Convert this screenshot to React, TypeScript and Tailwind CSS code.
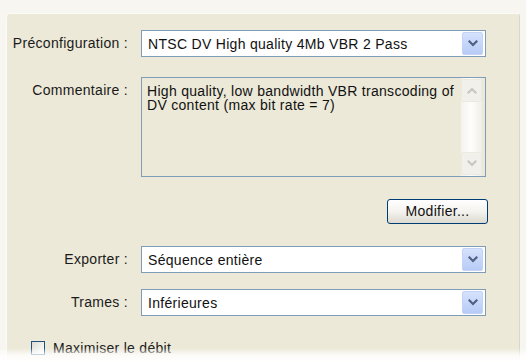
import React from "react";

const font = { fontFamily: '"Liberation Sans", Arial, sans-serif' };

function Chevron({ color = "#4d6185", up = false }: { color?: string; up?: boolean }) {
  return (
    <svg width="10" height="7" viewBox="0 0 10 7">
      <path
        d={up ? "M1.5 5.5 L5 2 L8.5 5.5" : "M1.5 1.5 L5 5 L8.5 1.5"}
        fill="none"
        stroke={color}
        strokeWidth="2.2"
        strokeLinecap="square"
      />
    </svg>
  );
}

function Select({ value }: { value: string }) {
  return (
    <div className="flex h-[27px] w-[345px] items-center border border-[#7f9db9] bg-white pl-[6px] pr-[2px]">
      <span className="flex-1 text-[14px] leading-none tracking-[0.3px] text-[#111]">{value}</span>
      <div className="flex h-[23px] w-[21px] items-center justify-center rounded-[2px] border border-[#c4d3f5] bg-gradient-to-b from-[#d6e2fd] to-[#b7cbf6]">
        <Chevron />
      </div>
    </div>
  );
}

export default function App() {
  return (
    <div className="relative h-[362px] w-[526px] overflow-hidden bg-[#f7f6f1]" style={font}>
      <div className="ml-[6px] mt-[13px] h-[349px] w-[514px] rounded-t-[4px] border-l border-t border-r border-l-[#fbfaf6] border-t-[#fbfaf6] border-r-[#d9d6c7] bg-[#ece9d8]">
        <div className="grid grid-cols-[121px_345px] gap-x-[13px] pt-[16px] tracking-[0.3px]">
          {/* Row 1 */}
          <div className="flex h-[27px] items-center justify-end text-[14px] text-[#1a1a1a]">Préconfiguration :</div>
          <Select value="NTSC DV High quality 4Mb VBR 2 Pass" />

          {/* Row 2 */}
          <div className="mt-[20px] flex justify-end pt-[6px] text-[14px] leading-[14px] text-[#1a1a1a]">Commentaire :</div>
          <div className="mt-[20px] flex h-[100px] border border-[#7f9db9] bg-[#ece9d8]">
            <div className="flex-1 pl-[5px] pt-[6px] text-[14px] leading-[14px] text-[#111]">
              High quality, low bandwidth VBR transcoding of DV content (max bit rate = 7)
            </div>
            <div className="mr-[3px] flex w-[21px] flex-col justify-between bg-gradient-to-r from-[#f4f3ee] via-[#fdfdfb] to-[#f0efe8] py-[1px]">
              <div className="flex h-[23px] items-center justify-center rounded-[2px] border border-[#eceae0] bg-[#f1f0ea]">
                <Chevron color="#c9c8c0" up />
              </div>
              <div className="flex h-[23px] items-center justify-center rounded-[2px] border border-[#eceae0] bg-[#f1f0ea]">
                <Chevron color="#c9c8c0" />
              </div>
            </div>
          </div>

          {/* Row 3 button */}
          <div />
          <div className="mt-[22px] flex justify-end">
            <button className="-mr-[2px] flex h-[25px] w-[101px] items-center justify-center rounded-[3px] border border-[#003c74] bg-gradient-to-b from-[#ffffff] via-[#f4f3ee] to-[#dcdad0] text-[14px] text-[#111]">
              Modifier...
            </button>
          </div>

          {/* Row 4 */}
          <div className="mt-[22px] flex h-[27px] items-center justify-end text-[14px] text-[#1a1a1a]">Exporter :</div>
          <div className="mt-[22px]">
            <Select value="Séquence entière" />
          </div>

          {/* Row 5 */}
          <div className="mt-[16px] flex h-[27px] items-center justify-end text-[14px] text-[#1a1a1a]">Trames :</div>
          <div className="mt-[16px]">
            <Select value="Inférieures" />
          </div>
        </div>

        <div className="ml-[24px] mt-[25px] flex items-center gap-[8px]">
          <div className="h-[14px] w-[14px] border border-[#1c5180] bg-gradient-to-br from-[#dcdcd6] to-[#ffffff]" />
          <span className="text-[14px] leading-none tracking-[0.3px] text-[#1a1a1a]">Maximiser le débit</span>
        </div>
      </div>
      <div className="pointer-events-none absolute bottom-0 left-0 h-[14px] w-full bg-gradient-to-b from-[#ffffff00] via-[#ffffffcc] to-[#ffffff]" />
    </div>
  );
}
